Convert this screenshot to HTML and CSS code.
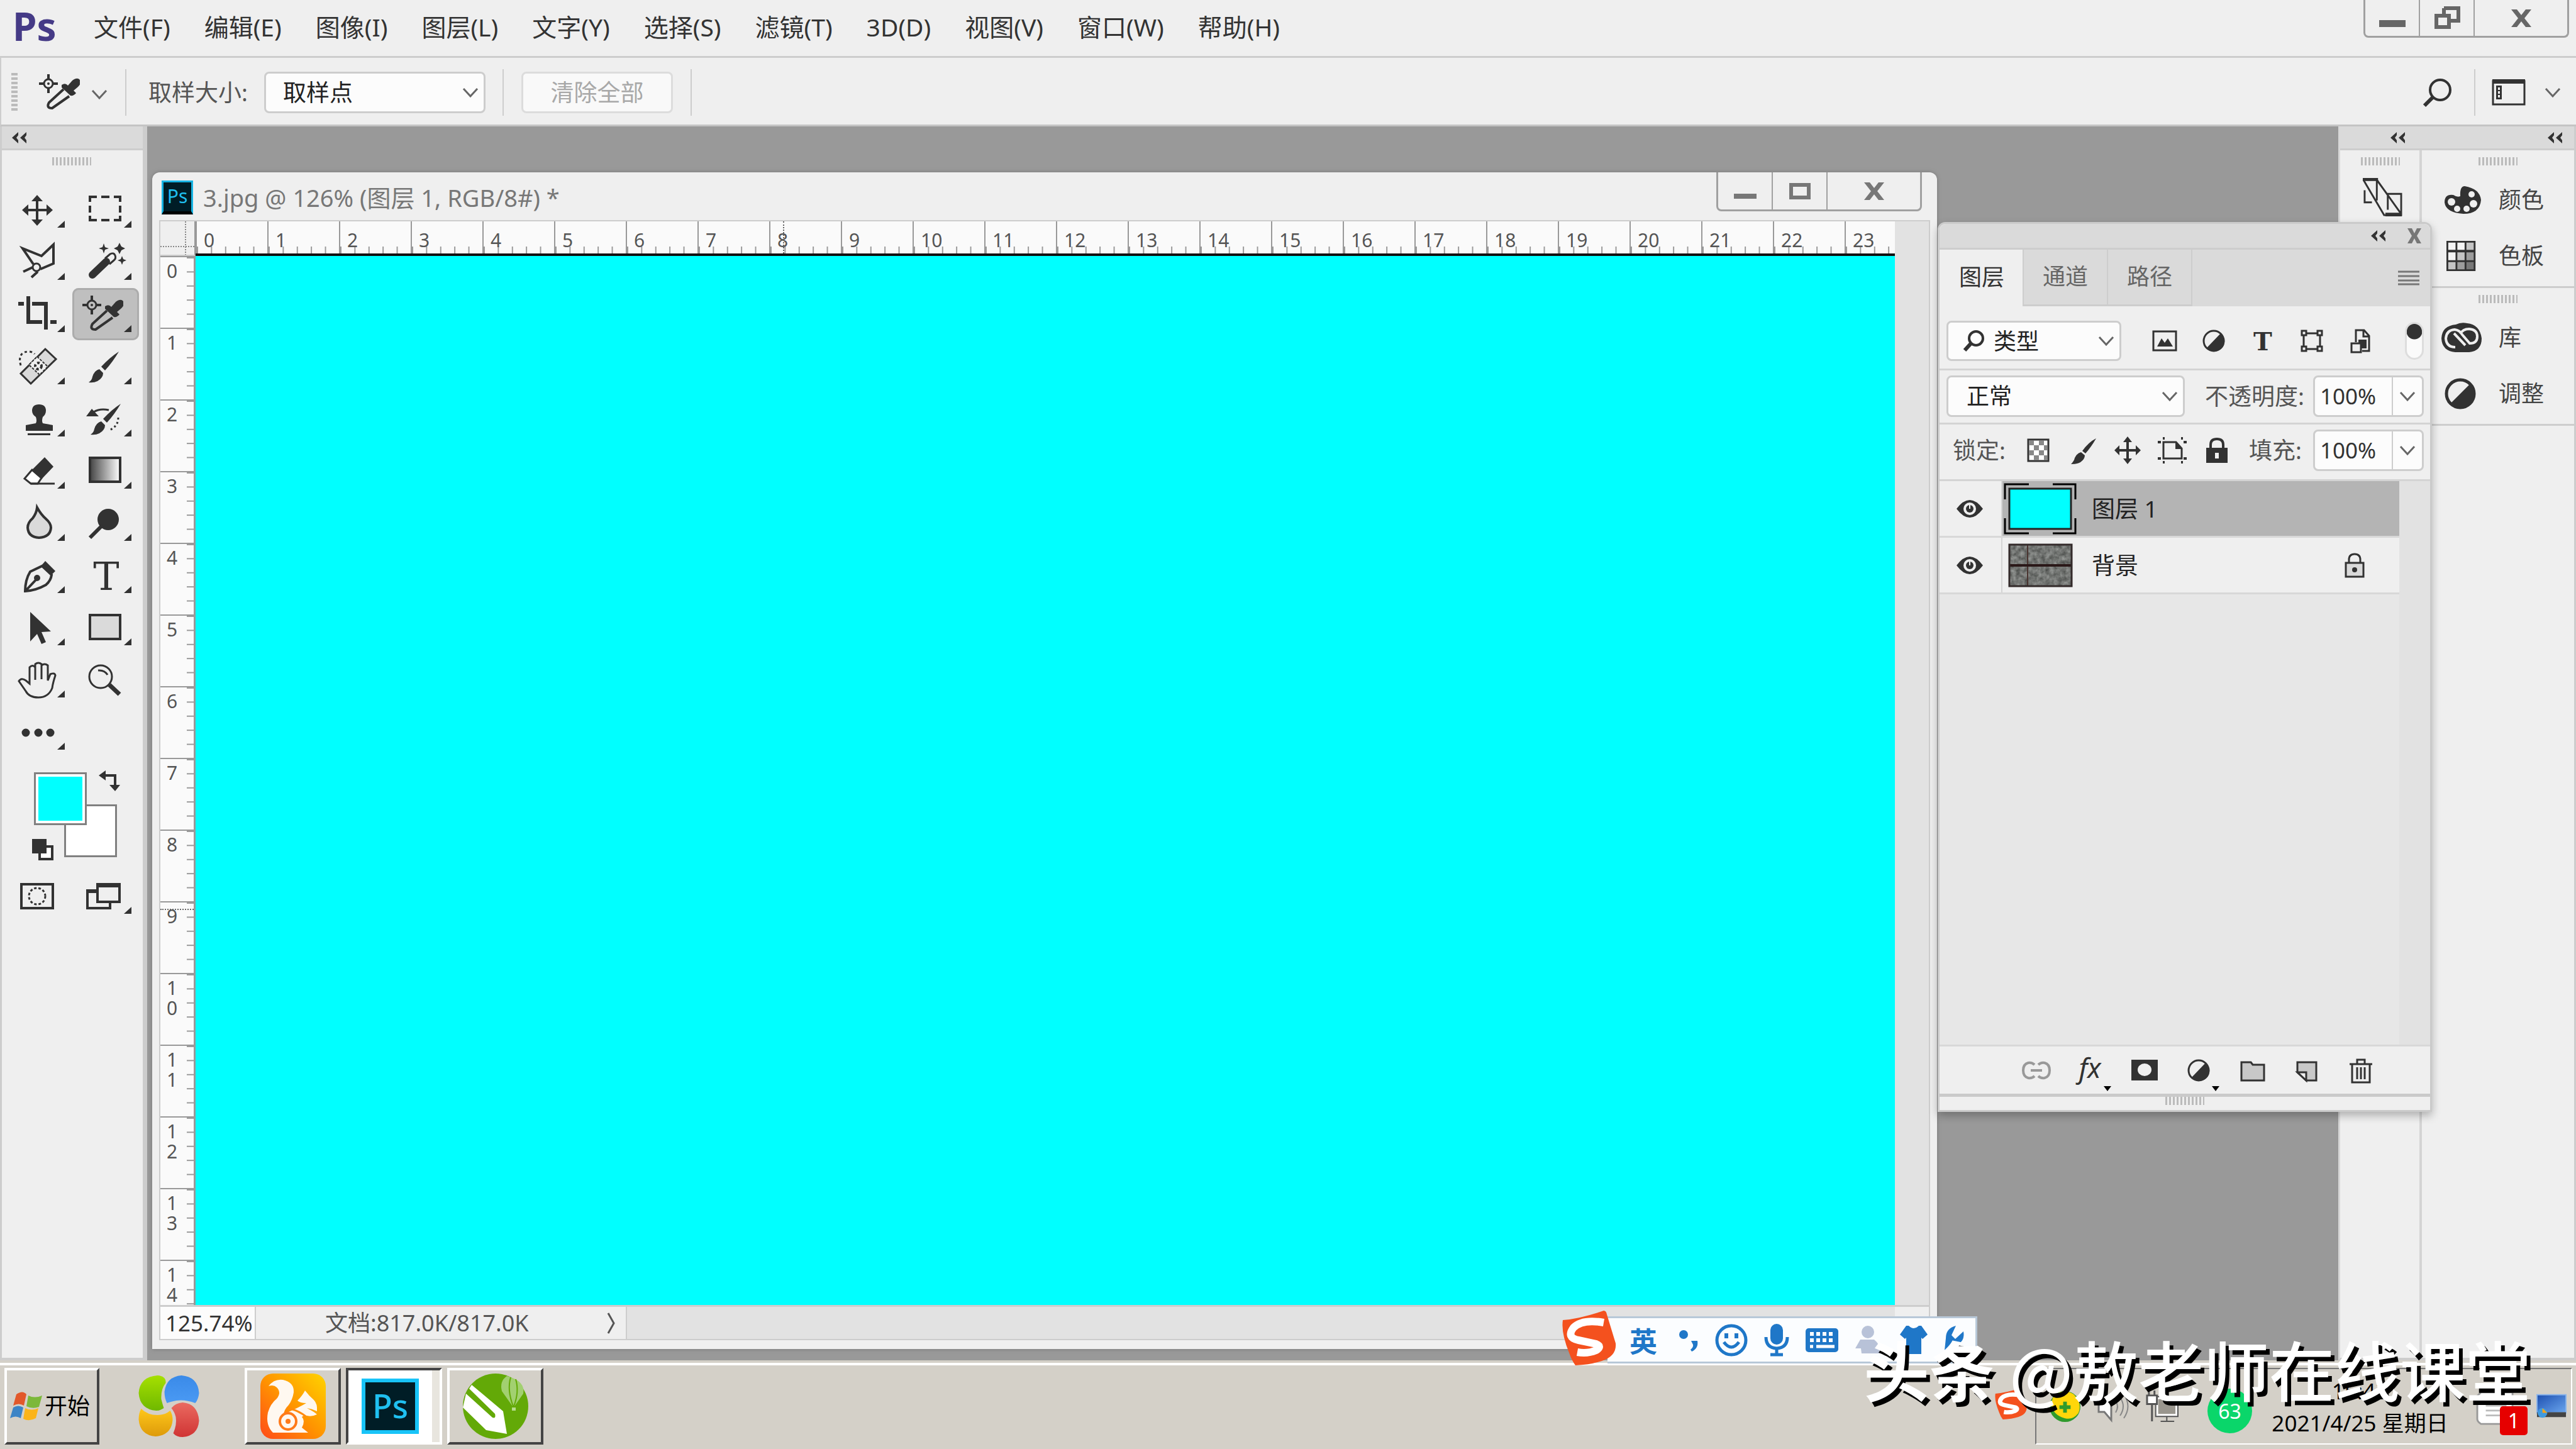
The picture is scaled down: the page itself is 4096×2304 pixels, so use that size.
FILE: index.html
```html
<!DOCTYPE html>
<html lang="zh-CN">
<head>
<meta charset="utf-8">
<title>3.jpg @ 126% (图层 1, RGB/8#) *</title>
<link rel="stylesheet" href="styles.css">
</head>
<body>
<svg class="defs" aria-hidden="true">
  <defs>
    <symbol id="chev" viewBox="0 0 26 16"><path d="M2 2l11 12L24 2" fill="none" stroke="#666" stroke-width="3"/></symbol>
    <symbol id="dbl" viewBox="0 0 26 18"><path d="M12 0L2 9l10 9V13L9 9l3-4zM25 0L15 9l10 9V13L22 9l3-4z" fill="#323232"/></symbol>
    <symbol id="flag" viewBox="0 0 12 11"><path d="M12 0V11H0z" fill="#323232"/></symbol>
    <symbol id="dropper" viewBox="0 0 66 60">
      <circle cx="16" cy="16" r="7" fill="none" stroke="#323232" stroke-width="3"/>
      <circle cx="16" cy="16" r="2" fill="#323232"/>
      <path d="M16 1v9M16 22v9M1 16h9M22 16h9" stroke="#323232" stroke-width="4"/>
      <path d="M40 25L17 46q-5 9 5 9L49 36" fill="none" stroke="#323232" stroke-width="4"/>
      <path d="M37 18q6-4 10 1l7-8q8-6 12-1t-4 12l-6 5 4 4q-4 5-9 4L37 22z" fill="#323232"/>
    </symbol>
    <symbol id="half" viewBox="0 0 38 38"><circle cx="19" cy="19" r="16" fill="none" stroke="#323232" stroke-width="3"/><path d="M30 7A16 16 0 1 1 8 30z" fill="#323232"/></symbol>
    <symbol id="eye" viewBox="0 0 42 28"><path d="M0 14Q21-14 42 14 21 42 0 14z" fill="#323232"/><circle cx="21" cy="14" r="10" fill="#efefef"/><circle cx="21" cy="14" r="6" fill="#323232"/><path d="M21 8v6" stroke="#efefef" stroke-width="2"/></symbol>
    <symbol id="sogou" viewBox="0 0 88 88"><path d="M3 16Q30 14 68 1q4 0 5 6l14 46q2 20-22 28-18 6-42 7-6-8-10-20Q0 36 3 16z" fill="#f4511e"/><path d="M68 20Q34 14 20 28q-12 16 8 20l28 6q10 4 0 10-14 6-30 3" fill="none" stroke="#fff" stroke-width="12"/></symbol>
    <linearGradient id="gr"><stop offset="0" stop-color="#444"/><stop offset="1" stop-color="#fff"/></linearGradient>
    <linearGradient id="uc" x1="1" y1="0" x2="0" y2="1"><stop offset="0" stop-color="#ffd400"/><stop offset=".5" stop-color="#ff9500"/><stop offset="1" stop-color="#ff4a1a"/></linearGradient>
    <linearGradient id="scr" x1="0" y1="0" x2="1" y2="1"><stop offset="0" stop-color="#1d4fb0"/><stop offset="1" stop-color="#6ba6ee"/></linearGradient>
    <linearGradient id="g1" x1="0" y1="0" x2="0" y2="1"><stop offset="0" stop-color="#a6e000"/><stop offset="1" stop-color="#6fb800"/></linearGradient>
    <linearGradient id="g2" x1="0" y1="0" x2="0" y2="1"><stop offset="0" stop-color="#3a8ae8"/><stop offset="1" stop-color="#4a9af4"/></linearGradient>
    <linearGradient id="g3" x1="0" y1="0" x2="0" y2="1"><stop offset="0" stop-color="#ffc71a"/><stop offset="1" stop-color="#dd9a0a"/></linearGradient>
    <linearGradient id="g4" x1="0" y1="0" x2="0" y2="1"><stop offset="0" stop-color="#ea6a60"/><stop offset="1" stop-color="#d03434"/></linearGradient>
    <filter id="grain" x="0" y="0" width="1" height="1" color-interpolation-filters="sRGB"><feTurbulence type="fractalNoise" baseFrequency=".15" numOctaves="3" seed="4"/><feColorMatrix values=".4 0 0 0 .25 .4 0 0 0 .26 .4 0 0 0 .25 0 0 0 0 1"/></filter>
  </defs>
</svg>

<header class="menubar">
  <span class="app-logo">Ps</span>
  <nav class="menus">
    <button>文件(F)</button><button>编辑(E)</button><button>图像(I)</button><button>图层(L)</button><button>文字(Y)</button><button>选择(S)</button><button>滤镜(T)</button><button>3D(D)</button><button>视图(V)</button><button>窗口(W)</button><button>帮助(H)</button>
  </nav>
  <div class="win-controls">
    <button aria-label="最小化"><svg width="42" height="36"><path d="M0 21h42v11H0z" fill="#666"/></svg></button>
    <button aria-label="还原"><svg width="42" height="36"><path d="M16 2h23v20H26M16 2v10" fill="none" stroke="#666" stroke-width="6"/><path d="M4 14h20v18H4z" fill="#efefef" stroke="#666" stroke-width="6"/></svg></button>
    <button aria-label="关闭"><svg width="32" height="28"><path d="M0 0h9l7 9 7-9h9L21 14l11 14h-9l-7-9-7 9H0l11-14z" fill="#666"/></svg></button>
  </div>
</header>

<section class="options">
  <span class="grip-v"></span>
  <svg class="opt-tool" width="66" height="60"><use href="#dropper"/></svg>
  <svg class="opt-chev" width="26" height="16"><use href="#chev"/></svg>
  <span class="sep"></span>
  <label class="opt-label" for="sample">取样大小:</label>
  <span class="select sample"><select id="sample"><option>取样点</option></select><svg width="26" height="16"><use href="#chev"/></svg></span>
  <span class="sep"></span>
  <button class="clear" disabled>清除全部</button>
  <span class="sep"></span>
  <div class="options-right">
    <svg width="46" height="46"><circle cx="27" cy="19" r="16" fill="none" stroke="#323232" stroke-width="4"/><path d="M15 31L2 44" stroke="#323232" stroke-width="6"/></svg>
    <span class="sep"></span>
    <svg width="54" height="42"><path d="M2 3h50v37H2z" fill="none" stroke="#323232" stroke-width="3"/><path d="M1 0h52v7H1zM7 10h9v22H7z" fill="#323232"/><path d="M10 13h3v4h-3zM10 19h3v4h-3zM10 25h3v4h-3z" fill="#efefef"/></svg>
    <svg class="ws-chev" width="26" height="16"><use href="#chev"/></svg>
  </div>
</section>

<main class="workspace">
  <aside class="toolbar">
    <div class="strip"><svg width="26" height="18"><use href="#dbl"/></svg></div>
    <span class="grip-h"></span>
    <div class="tools">
      <button aria-label="移动"><svg class="ico" viewBox="0 0 106 83"><path d="M50 26v34M34 42h34" stroke="#323232" stroke-width="4"/><path d="M50 18l9 10H41zM50 67l9-10H41zM26 42l10-9v18zM75 42l-10-9v18z" fill="#323232"/></svg><svg class="flag"><use href="#flag"/></svg></button>
      <button aria-label="选框"><svg class="ico" viewBox="0 0 106 83"><path d="M28 29v-8h11M46 21h13M66 21h10v8M76 35v11M76 51v7H66M59 58H46M39 58H28v-7M28 46V35" fill="none" stroke="#323232" stroke-width="4"/></svg><svg class="flag"><use href="#flag"/></svg></button>
      <button aria-label="套索"><svg class="ico" viewBox="0 0 106 83"><path d="M44 45L27 20l30 12 19-18v30l-21 9M28 57l15-7M41 66l10-9" fill="none" stroke="#323232" stroke-width="4"/><circle cx="49" cy="50" r="6" fill="none" stroke="#323232" stroke-width="3"/></svg><svg class="flag"><use href="#flag"/></svg></button>
      <button aria-label="魔棒"><svg class="ico" viewBox="0 0 106 83"><path d="M32 62l22-21" stroke="#323232" stroke-width="12" stroke-linecap="round"/><path d="M52 36l8-7q6-3 8 2t-2 8l-7 6" fill="none" stroke="#323232" stroke-width="3"/><path d="M50 12l2 6 6 2-6 2-2 6-2-6-6-2 6-2zM75 11l3 6 6 3-6 3-3 6-3-6-6-3 6-3zM79 32l2 5 5 2-5 2-2 5-2-5-5-2 5-2z" fill="#323232"/></svg><svg class="flag"><use href="#flag"/></svg></button>
      <button aria-label="裁剪"><svg class="ico" viewBox="0 0 106 83"><path d="M20 25h9M36 13v41h22M42 25h22v41M71 54h10" fill="none" stroke="#323232" stroke-width="6"/></svg><svg class="flag"><use href="#flag"/></svg></button>
      <button class="active" aria-label="颜色取样器"><svg class="ico" viewBox="-15 -11 106 83"><svg width="66" height="60"><use href="#dropper"/></svg></svg><svg class="flag"><use href="#flag"/></svg></button>
      <button aria-label="修复"><svg class="ico" viewBox="0 0 106 83"><path d="M63 14l17 16-40 39-16-16z" fill="#dadada" stroke="#323232" stroke-width="3"/><path d="M50 26l17 16-13 13-17-16z" fill="#efefef" stroke="#323232" stroke-width="2" stroke-dasharray="4 2"/><circle cx="52" cy="41" r="5" fill="none" stroke="#323232" stroke-width="4" stroke-dasharray="4 3"/><path d="M24 40q-6-22 14-22 6 1 8 4" fill="none" stroke="#323232" stroke-width="3" stroke-dasharray="4 4"/></svg><svg class="flag"><use href="#flag"/></svg></button>
      <button aria-label="画笔"><svg class="ico" viewBox="0 0 106 83"><path d="M74 18q-10 17-22 30l-6-6Q60 27 74 18zM43 46l6 6q0 8-9 13-6 3-14 2 5-3 6-9 3-10 11-12z" fill="#323232"/></svg><svg class="flag"><use href="#flag"/></svg></button>
      <button aria-label="图章"><svg class="ico" viewBox="0 0 106 83"><path d="M53 19q11 0 11 10 0 6-5 10-2 6 0 10 16 3 16 3v9H32v-9l16-3q2-4 0-10-6-4-6-10 0-10 11-10zM35 65h36v3H35z" fill="#323232"/></svg><svg class="flag"><use href="#flag"/></svg></button>
      <button aria-label="历史画笔"><svg class="ico" viewBox="0 0 106 83"><path d="M77 18q-10 17-22 30l-6-6Q63 27 77 18zM46 46l6 6q0 8-9 13-6 3-14 2 5-3 6-9 3-10 11-12zM22 38l9-12 11 12z" fill="#323232"/><path d="M34 31q10-6 24-3" fill="none" stroke="#323232" stroke-width="3"/><path d="M73 40q0 14-14 20" fill="none" stroke="#323232" stroke-width="3" stroke-dasharray="3 4"/></svg><svg class="flag"><use href="#flag"/></svg></button>
      <button aria-label="橡皮擦"><svg class="ico" viewBox="0 0 106 83"><path d="M42 40L30 54l10 8h11l6-9z" fill="#fff" stroke="#323232" stroke-width="3"/><path d="M62 20l14 15-19 20-16-14z" fill="#323232"/><path d="M40 62h38" stroke="#323232" stroke-width="3"/></svg><svg class="flag"><use href="#flag"/></svg></button>
      <button aria-label="渐变"><svg class="ico" viewBox="0 0 106 83"><path d="M28 21h48v38H28z" fill="url(#gr)" stroke="#323232" stroke-width="4"/></svg><svg class="flag"><use href="#flag"/></svg></button>
      <button aria-label="模糊"><svg class="ico" viewBox="0 0 106 83"><path d="M50 17q6 11 14 18 8 7 8 14-1 15-19 16-17-1-18-16 0-8 8-15 6-8 7-17z" fill="#dadada" stroke="#323232" stroke-width="4"/></svg><svg class="flag"><use href="#flag"/></svg></button>
      <button aria-label="减淡"><svg class="ico" viewBox="0 0 106 83"><circle cx="57" cy="36" r="17" fill="#323232"/><path d="M28 65l20-20" stroke="#323232" stroke-width="6"/></svg><svg class="flag"><use href="#flag"/></svg></button>
      <button aria-label="钢笔"><svg class="ico" viewBox="0 0 106 83"><path d="M31 67q0-18 8-31l19-9 15 14q-1 9-9 16-16 9-33 10zM32 66l17-18" fill="none" stroke="#323232" stroke-width="4"/><circle cx="50" cy="46" r="5" fill="#323232"/><path d="M63 19l16 16-6 6-16-15z" fill="#323232"/></svg><svg class="flag"><use href="#flag"/></svg></button>
      <button aria-label="文字"><svg class="ico" viewBox="0 0 106 83"><text class="tee" x="54" y="65">T</text></svg><svg class="flag"><use href="#flag"/></svg></button>
      <button aria-label="路径选择"><svg class="ico" viewBox="0 0 106 83"><path d="M39 17v47l11-12 7 16 7-3-7-16 15-1z" fill="#323232"/></svg><svg class="flag"><use href="#flag"/></svg></button>
      <button aria-label="矩形"><svg class="ico" viewBox="0 0 106 83"><path d="M28 22h48v38H28z" fill="#dadada" stroke="#323232" stroke-width="4"/></svg><svg class="flag"><use href="#flag"/></svg></button>
      <button aria-label="抓手"><svg class="ico" viewBox="0 0 106 83"><path d="M38 48V22q5-5 9 0v20V17q5-4 10 0v24V19q5-4 10 0v24l4-10q7-3 8 2-4 12-5 20-6 15-22 15-15 0-20-10L21 44q4-6 11-1z" fill="none" stroke="#323232" stroke-width="3"/></svg><svg class="flag"><use href="#flag"/></svg></button>
      <button aria-label="缩放"><svg class="ico" viewBox="0 0 106 83"><circle cx="45" cy="37" r="18" fill="none" stroke="#323232" stroke-width="3"/><path d="M41 27q10-1 15 7" fill="none" stroke="#323232" stroke-width="3"/><path d="M59 50l16 15" stroke="#323232" stroke-width="7"/></svg></button>
      <button aria-label="更多"><svg class="ico" viewBox="0 0 106 83"><path d="M32 43h0M52 43h0M71 43h0" stroke="#323232" stroke-width="13" stroke-linecap="round"/></svg><svg class="flag"><use href="#flag"/></svg></button>
    </div>
    <div class="swatches">
      <span class="bg"></span><span class="fg"></span>
      <svg class="swap" viewBox="0 0 34 34"><path d="M8 8h18v16" fill="none" stroke="#323232" stroke-width="4"/><path d="M0 8L11 0v16zM17 23h17l-8 10z" fill="#323232"/></svg>
      <svg class="reset" viewBox="0 0 34 34"><path d="M12 12h20v20H12z" fill="#fff" stroke="#323232" stroke-width="4"/><path d="M0 0h23v23H0z" fill="#323232"/></svg>
    </div>
    <div class="tools modes">
      <button aria-label="快速蒙版"><svg class="ico" viewBox="0 0 106 83"><path d="M25 23h50v38H25z" fill="none" stroke="#323232" stroke-width="4"/><circle cx="50" cy="42" r="13" fill="none" stroke="#323232" stroke-width="3" stroke-dasharray="4 3"/></svg></button>
      <button aria-label="屏幕模式"><svg class="ico" viewBox="0 0 106 83"><path d="M24 34h36v27H24z" fill="#efefef" stroke="#323232" stroke-width="4"/><path d="M40 25h35v26H40z" fill="#efefef" stroke="#323232" stroke-width="4"/><path d="M22 31h18v6H22zM38 21h39v7H38z" fill="#323232"/></svg><svg class="flag"><use href="#flag"/></svg></button>
    </div>
  </aside>

  <aside class="dock">
    <div class="strip"><svg width="26" height="18"><use href="#dbl"/></svg><svg width="26" height="18"><use href="#dbl"/></svg></div>
    <div class="dock-cols">
      <div class="dock-col">
        <span class="grip-h"></span>
        <svg class="history" viewBox="0 0 66 64"><path d="M2 3h22v34M2 3l34 58h28V26H42v26M4 20v20h12M24 3l40 56M26 6l16 22" fill="none" stroke="#323232" stroke-width="3"/><path d="M1 0h25v5H1zM38 57h27v6H38z" fill="#323232"/></svg>
      </div>
      <div class="dock-col">
        <section>
          <span class="grip-h"></span>
          <button class="entry"><svg viewBox="0 0 58 44"><path d="M25 16Q24 0 32 0 56 4 58 22 56 44 30 44 2 42 0 26 0 12 14 14 20 18 25 16z" fill="#323232"/><g fill="#efefef"><ellipse cx="11" cy="25" rx="6" ry="6"/><circle cx="20" cy="36" r="5"/><circle cx="35" cy="36" r="5"/><circle cx="46" cy="28" r="6"/><circle cx="43" cy="13" r="5"/></g></svg>颜色</button>
          <button class="entry"><svg viewBox="0 0 58 54"><path d="M2 2h48v50H2z" fill="#323232"/><g><path d="M5 5h12v12H5zM20 5h12v12H20zM5 21h12v13H5z" fill="#f4f4f4"/><path d="M35 5h12v12H35zM20 21h12v13H20zM5 37h12v12H5z" fill="#c4c4c4"/><path d="M35 21h12v13H35zM20 37h12v12H20z" fill="#9c9c9c"/><path d="M35 37h12v12H35z" fill="#777"/></g></svg>色板</button>
        </section>
        <section>
          <span class="grip-h"></span>
          <button class="entry"><svg class="wide" viewBox="0 0 66 50"><path d="M24 4q-22 2-23 22 1 20 22 22h22q20-2 20-22Q62 4 42 2 32 0 24 4z" fill="#323232"/><path d="M39 37l-18-19M23 40q-14 0-15-14 1-13 14-14 8 1 12 8l12 14q12 0 12-11T45 11q-10 0-14 8" fill="none" stroke="#efefef" stroke-width="4"/></svg>库</button>
          <button class="entry"><svg viewBox="0 0 58 50"><circle cx="25" cy="25" r="22" fill="none" stroke="#323232" stroke-width="5"/><path d="M41 9A22 22 0 1 1 9 41z" fill="#323232"/></svg>调整</button>
        </section>
      </div>
    </div>
  </aside>

  <article class="doc">
    <header class="doc-title">
      <span class="doc-logo">Ps</span>
      <h1>3.jpg @ 126% (图层 1, RGB/8#) *</h1>
      <div class="win-controls small">
        <button aria-label="最小化"><svg width="36" height="36"><path d="M0 22h36v8H0z" fill="#777"/></svg></button>
        <button aria-label="最大化"><svg width="36" height="36"><path d="M4 8h28v20H4z" fill="none" stroke="#777" stroke-width="6"/></svg></button>
        <button aria-label="关闭"><svg width="32" height="28"><path d="M0 0h9l7 9 7-9h9L21 14l11 14h-9l-7-9-7 9H0l11-14z" fill="#777"/></svg></button>
      </div>
    </header>
    <div class="doc-body">
      <div class="corner"></div>
      <div class="ruler-h"><span>0</span><span>1</span><span>2</span><span>3</span><span>4</span><span>5</span><span>6</span><span>7</span><span>8</span><span>9</span><span>10</span><span>11</span><span>12</span><span>13</span><span>14</span><span>15</span><span>16</span><span>17</span><span>18</span><span>19</span><span>20</span><span>21</span><span>22</span><span>23</span><i class="mark-x"></i></div>
      <div class="track-top"></div>
      <div class="ruler-v"><span>0</span><span>1</span><span>2</span><span>3</span><span>4</span><span>5</span><span>6</span><span>7</span><span>8</span><span>9</span><span>1<br>0</span><span>1<br>1</span><span>1<br>2</span><span>1<br>3</span><span>1<br>4</span><i class="mark-y"></i></div>
      <div class="canvas"></div>
      <div class="track-v"></div>
      <footer class="status">
        <input class="zoom-field" aria-label="缩放" value="125.74%">
        <div class="status-info"><span>文档:817.0K/817.0K</span><svg width="16" height="36"><path d="M2 2l9 16-9 16" fill="none" stroke="#555" stroke-width="3"/></svg></div>
      </footer>
    </div>
  </article>

  <aside class="panel">
    <div class="panel-head">
      <svg width="26" height="18"><use href="#dbl"/></svg>
      <svg width="22" height="24"><path d="M0 0h7l4 8 4-8h7l-7 12 7 12h-7l-4-8-4 8H0l7-12z" fill="#777"/></svg>
    </div>
    <div class="tabs">
      <button class="on">图层</button><button>通道</button><button>路径</button>
      <svg width="34" height="24"><path d="M0 2h34M0 9h34M0 16h34M0 22h34" stroke="#777" stroke-width="3"/></svg>
    </div>
    <div class="row filter">
      <span class="select kind"><svg class="lens" viewBox="0 0 34 34"><circle cx="20" cy="13" r="11" fill="none" stroke="#323232" stroke-width="4"/><path d="M12 21L2 32" stroke="#323232" stroke-width="6"/></svg><select aria-label="筛选类型"><option>类型</option></select><svg width="26" height="16"><use href="#chev"/></svg></span>
      <div class="filters">
        <svg viewBox="0 0 40 40"><path d="M2 5h36v30H2z" fill="none" stroke="#323232" stroke-width="3"/><path d="M8 29l7-13 5 7 5-7 8 13z" fill="#323232"/></svg>
        <svg viewBox="-1 -1 40 40"><use href="#half" width="38" height="38"/></svg>
        <svg viewBox="0 0 40 40"><text class="tee bold" x="20" y="35">T</text></svg>
        <svg viewBox="0 0 40 40"><path d="M7 8h26v25H7z" fill="none" stroke="#323232" stroke-width="3"/><path d="M4 4h7v7H4zM29 4h7v7h-7zM4 29h7v7H4zM29 29h7v7h-7z" fill="#efefef" stroke="#323232" stroke-width="3"/></svg>
        <svg viewBox="0 0 40 40"><path d="M12 22V3h13l8 9v24H22M24 3v10h9" fill="none" stroke="#323232" stroke-width="3"/><path d="M16 18h13v14H16z" fill="#323232"/><path d="M5 24h15v14H5z" fill="#efefef" stroke="#323232" stroke-width="3"/></svg>
      </div>
      <span class="toggle"></span>
    </div>
    <div class="row blend">
      <span class="select mode"><select aria-label="混合模式"><option>正常</option></select><svg width="26" height="16"><use href="#chev"/></svg></span>
      <div class="field"><label for="opacity">不透明度:</label><span class="num"><input id="opacity" value="100%"><i><svg width="26" height="16"><use href="#chev"/></svg></i></span></div>
    </div>
    <div class="row locks">
      <span class="lock-label">锁定:</span>
      <div class="lock-icons">
        <svg viewBox="0 0 46 46"><path d="M7 6h32v34H7z" fill="#fff" stroke="#323232" stroke-width="3"/><path d="M8 7h8v8H8zM24 7h8v8h-8zM16 15h8v8h-8zM32 15h6v8h-6zM8 23h8v8H8zM24 23h8v8h-8zM16 31h8v8h-8zM32 31h6v8h-6z" fill="#888"/></svg>
        <svg viewBox="0 0 46 46"><path d="M44 4Q36 18 27 28l-5-4Q32 10 44 4zM20 26l6 5q0 6-7 11-5 3-15 3 5-5 6-10 4-8 10-9z" fill="#323232"/></svg>
        <svg viewBox="0 0 46 46"><path d="M23 6v34M6 23h34" stroke="#323232" stroke-width="4"/><path d="M23 1l7 9H16zM23 45l7-9H16zM2 23l8-8v16zM44 23l-8-8v16z" fill="#323232"/></svg>
        <svg viewBox="0 0 46 46"><path d="M9 10h20l9 10v16H9z" fill="none" stroke="#323232" stroke-width="3"/><path d="M28 9v12h11zM8 2v4h3V2zM37 2v4h3V2zM8 40v4h3v-4zM37 40v4h3v-4zM0 8v4h5V8zM41 8v4h5V8zM0 34v4h5v-4zM41 34v4h5v-4z" fill="#323232"/></svg>
        <svg viewBox="0 0 46 46"><path d="M13 20v-6q0-9 10-9t10 9v6" fill="none" stroke="#323232" stroke-width="4"/><path d="M6 19h34v24H6z" fill="#323232"/><path d="M20 27h6v9h-6z" fill="#efefef"/></svg>
      </div>
      <div class="field"><label for="fill">填充:</label><span class="num"><input id="fill" value="100%"><i><svg width="26" height="16"><use href="#chev"/></svg></i></span></div>
    </div>
    <div class="layers">
      <ul>
        <li class="layer selected">
          <span class="eye"><svg width="42" height="28"><use href="#eye"/></svg></span>
          <span class="thumb framed"><svg viewBox="0 0 116 82"><path d="M2 26V2h38M78 2h36v24M114 56v24H78M40 80H2V56" fill="none" stroke="#000" stroke-width="3"/><path d="M9 9h98v64H9z" fill="#0ff" stroke="#222" stroke-width="3"/></svg></span>
          <span class="name">图层 1</span>
        </li>
        <li class="layer">
          <span class="eye"><svg width="42" height="28"><use href="#eye"/></svg></span>
          <span class="thumb"><svg viewBox="0 0 116 82"><path d="M8 7h101v68H8z" filter="url(#grain)"/><path d="M38 8v66" stroke="#4a3430" stroke-width="2"/><path d="M8 41h101" stroke="#2a1818" stroke-width="4"/><path d="M9 8h99v66H9z" fill="none" stroke="#332a2a" stroke-width="3"/></svg></span>
          <span class="name">背景</span>
          <svg class="layer-lock" viewBox="0 0 34 40"><path d="M8 16v-5q0-9 9-9t9 9v5" fill="none" stroke="#323232" stroke-width="3"/><path d="M3 16h28v22H3z" fill="#dadada" stroke="#323232" stroke-width="3"/><circle cx="17" cy="27" r="4" fill="#323232"/></svg>
        </li>
      </ul>
      <div class="layer-track"></div>
    </div>
    <div class="panel-foot">
      <svg viewBox="0 0 50 50"><path d="M22 16q-4-4-10-3-8 2-8 12t8 12q6 1 10-3M28 16q4-4 10-3 8 2 8 12t-8 12q-6 1-10-3" fill="none" stroke="#999" stroke-width="4"/><path d="M16 25h18" stroke="#999" stroke-width="4"/></svg>
      <span class="with-arrow"><svg viewBox="0 0 50 50"><text class="fx" x="24" y="37">fx</text></svg><svg class="tiny" viewBox="0 0 12 8"><path d="M0 0h12L6 8z"/></svg></span>
      <svg viewBox="0 0 50 50"><path d="M4 8h42v33H4z" fill="#323232"/><ellipse cx="25" cy="24" rx="11" ry="10" fill="#efefef"/></svg>
      <span class="with-arrow"><svg viewBox="0 0 50 50"><use href="#half" x="6" y="6" width="38" height="38"/></svg><svg class="tiny" viewBox="0 0 12 8"><path d="M0 0h12L6 8z"/></svg></span>
      <svg viewBox="0 0 50 50"><path d="M7 12h15l3 4h18v25H7z" fill="#c8c8c8" stroke="#323232" stroke-width="3"/></svg>
      <svg viewBox="0 0 50 50"><path d="M10 12h30v29H24L10 28z" fill="#c8c8c8" stroke="#323232" stroke-width="3"/><path d="M10 28h14v13z" fill="#efefef" stroke="#323232" stroke-width="3"/></svg>
      <svg viewBox="0 0 50 50"><path d="M7 15h36M19 14V8h12v6M11 16v28h28V16M19 20v19M25 20v19M31 20v19" fill="none" stroke="#323232" stroke-width="3"/></svg>
    </div>
    <div class="panel-grip"><span class="grip-h"></span></div>
  </aside>
</main>

<footer class="taskbar">
  <button class="task start"><svg viewBox="0 0 52 46"><path d="M10 4q10-7 16 0l-4 18q-8-5-17 0z" fill="#e2582a"/><path d="M29 6q10 5 22 0l-5 18q-10 4-20-1z" fill="#7cb83a"/><path d="M5 25q8-5 16 0l-4 17q-8-5-17 0z" fill="#3c84c6"/><path d="M24 26q10 5 21 0l-4 16q-11 6-20 1z" fill="#fbb41a"/></svg>开始</button>
  <svg class="clover" viewBox="0 0 96 98"><path d="M30 0q14 1 13 12-8 10-7 26 2 8 4 14-6 4-12 4Q2 54 0 28 2 2 30 0z" fill="url(#g1)"/><path d="M68 0q26 2 28 28-1 10-6 16-16-6-30-4-10 2-15 4-4-8-4-18Q44 2 68 0z" fill="url(#g2)"/><path d="M4 53q10 10 26 10 12 0 20-7 4 6 4 15-2 24-27 26Q2 95 0 70 0 60 4 53z" fill="url(#g3)"/><path d="M70 43q24 2 26 29-2 24-26 26-10 0-15-6 6-14 4-26-2-8-7-14 6-8 18-9z" fill="url(#g4)"/></svg>
  <button class="task" aria-label="UC浏览器"><svg viewBox="0 0 104 104"><rect width="104" height="104" rx="20" fill="url(#uc)"/><path d="M13 20Q22 8 36 10q18 4 17 20-2 12-8 20-8 8-8 16 0-2 8-5 18-8 28-14-10 0-14-4 8-8 12-16 6 8 14 15 6 6 5 18-8-4-16-5 12 6 16 10-8 4-16 2-6-1-8 2 6 6 0 17l10 8H20Q8 82 12 62q4-14 14-22 8-10 0-18-5-5-13-2z" fill="#fff8f0"/><circle cx="44" cy="76" r="13" fill="none" stroke="#ff7a1a" stroke-width="4"/><circle cx="44" cy="76" r="4" fill="#ff7a1a"/><path d="M48 56q14 4 24 12" fill="none" stroke="#ff8a10" stroke-width="3"/></svg></button>
  <button class="task pressed" aria-label="Photoshop"><span class="ps-logo">Ps</span></button>
  <button class="task" aria-label="CorelDRAW"><svg viewBox="0 0 104 104"><circle cx="52" cy="52" r="52" fill="#63a907"/><path d="M14 18l50 42 6 36-33-6L0 54l5-22 42 38q6 2 4-6L10 24z" fill="#fff"/><path d="M70 4q30 8 26 28L82 52h-3L62 28q-4-16 8-24z" fill="#a2d070"/><path d="M76 6q-6 20 4 46M84 9q6 20-3 43" fill="none" stroke="#63a907" stroke-width="2"/><path d="M78 54h6v5h-6z" fill="#b6dc8c"/></svg></button>
  <svg class="tray-sogou" viewBox="0 0 88 88" preserveAspectRatio="none"><use href="#sogou"/></svg>
  <div class="tray">
    <svg class="i360" viewBox="0 0 52 52"><circle cx="26" cy="26" r="25" fill="#2f9a2c"/><path d="M6 12Q22-6 40 6q14 14 8 30-8 12-22 9Q6 40 4 22z" fill="#ffd60a"/><path d="M26 18v18M17 27h18" stroke="#2f9a2c" stroke-width="6"/></svg>
    <svg class="speaker" viewBox="0 0 50 50"><path d="M2 17h9L22 5v42L11 34H2z" fill="#fff" stroke="#777" stroke-width="3"/><path d="M29 17q6 8 0 18M36 11q10 14 0 29M42 6q13 19 0 38" fill="none" stroke="#888" stroke-width="2"/></svg>
    <svg class="network" viewBox="0 0 52 52"><path d="M18 12h32v28H18z" fill="#9a968e" stroke="#fff" stroke-width="4"/><path d="M16 10h36v32H16zM24 50h22M34 42v8" fill="none" stroke="#555" stroke-width="2"/><path d="M2 8h16v14H2zM5 0v8M14 0v8M10 22v28" fill="#fff" stroke="#555" stroke-width="3"/></svg>
    <span class="score">63</span>
    <time class="clock"><span>15:43</span><span>2021/4/25 星期日</span></time>
    <span class="notes"><svg viewBox="0 0 62 60"><path d="M6 4h52v52H6q-6-4-6-8V10z" fill="#fff" stroke="#999" stroke-width="3"/><path d="M14 18h34M14 26h34M14 34h34M14 42h34" stroke="#bbb" stroke-width="3"/></svg><b>1</b></span>
    <svg class="monitor" viewBox="0 0 50 40"><path d="M1 1h48v30H1z" fill="url(#scr)" stroke="#8ab4ea" stroke-width="2"/><path d="M1 30h48v8H1z" fill="#444"/><circle cx="10" cy="31" r="8" fill="#3f9ae0"/><path d="M10 23v8h8z" fill="#f5a21a"/></svg>
  </div>
</footer>

<div class="ime">
  <svg class="ime-logo" viewBox="0 0 88 88"><use href="#sogou"/></svg>
  <div class="ime-bar">
    <span class="ime-lang">英</span>
    <svg width="30" height="40" viewBox="0 0 30 40"><circle cx="7" cy="11" r="7" fill="#1f77c8"/><path d="M19 21h10q2 12-9 17l-2-3q5-4 4-8z" fill="#1f77c8"/></svg>
    <svg width="52" height="52" viewBox="0 0 52 52"><circle cx="26" cy="26" r="23" fill="none" stroke="#1f77c8" stroke-width="5"/><path d="M18 15v8M34 15v8" stroke="#1f77c8" stroke-width="6"/><path d="M14 29q12 16 24 0" fill="none" stroke="#1f77c8" stroke-width="5"/></svg>
    <svg width="38" height="52" viewBox="0 0 38 52"><rect x="9" width="20" height="33" rx="10" fill="#1f77c8"/><path d="M2 21q0 17 17 18 17-1 17-18M19 38v10M9 49h20" fill="none" stroke="#1f77c8" stroke-width="5"/></svg>
    <svg width="52" height="38" viewBox="0 0 52 38"><rect width="52" height="38" rx="5" fill="#1f77c8"/><path d="M7 9h38M7 19h38" stroke="#fff" stroke-width="6" stroke-dasharray="6 4"/><path d="M7 29h5M17 29h29" stroke="#fff" stroke-width="5"/></svg>
    <svg width="44" height="46" viewBox="0 0 44 46"><circle cx="20" cy="10" r="10" fill="#b8c2d8"/><path d="M8 22h22q10 8 12 22H10L9 36H0z" fill="#b8c2d8"/></svg>
    <svg width="44" height="46" viewBox="0 0 44 46"><path d="M10 0h4q8 8 16 0h4l10 14-8 7-2-2v26H10V19l-2 2-8-7z" fill="#1f77c8"/></svg>
    <svg width="32" height="46" viewBox="0 0 32 46"><path d="M2 20Q2 4 18 0L11 15l6 6L30 9q3 16-12 22L8 45l-8-6z" fill="#1f77c8"/></svg>
  </div>
</div>
<p class="watermark"><b>头条</b> @敖老师在线课堂</p>
</body>
</html>
```
FILE: styles.css
```css
* { box-sizing: border-box; }
html, body { height: 100%; }
body {
  margin: 0;
  display: flex;
  flex-direction: column;
  overflow: hidden;
  position: relative;
  background: #efefef;
  color: #333;
  font-family: "Noto Sans", "Noto Sans CJK SC", sans-serif;
  font-size: 36px;
  line-height: 48px;
}
button, input, select { font: inherit; color: inherit; margin: 0; }
button { border: 0; padding: 0; background: none; }
svg { display: block; flex: none; overflow: visible; }
.defs { position: absolute; width: 0; height: 0; overflow: hidden; }

/* menu bar */
.menubar {
  height: 92px;
  flex: none;
  display: flex;
  align-items: flex-start;
  border-bottom: 3px solid #cdcdcd;
}
.app-logo {
  width: 149px;
  padding-left: 20px;
  font: bold 62px/82px "Noto Sans", sans-serif;
  color: #453a86;
}
.menus { display: flex; gap: 54px; font-size: 39px; line-height: 86px; }
.win-controls {
  margin-left: auto;
  margin-right: 11px;
  display: flex;
  height: 60px;
  border: 3px solid #a0a0a0;
  border-top: 0;
  border-radius: 0 0 8px 8px;
}
.win-controls button { width: 87px; display: grid; place-items: center; border-right: 2px solid #a0a0a0; }
.win-controls button:last-child { width: 147px; border-right: 0; }

/* options bar */
.options {
  height: 109px;
  flex: none;
  display: flex;
  align-items: center;
  padding: 3px 0 0 16px;
  border-left: 2px solid #cdcdcd;
  border-bottom: 3px solid #c4c4c4;
  font-size: 37px;
}
.grip-v {
  width: 10px;
  height: 62px;
  background: repeating-linear-gradient(#bbb 0 4px, transparent 4px 7px);
}
.grip-h {
  display: block;
  width: 62px;
  height: 13px;
  background: repeating-linear-gradient(90deg, #bbb 0 3px, transparent 3px 6px);
}
.opt-tool { margin-left: 33px; }
.opt-chev { margin: 6px 28px 0 18px; }
.sep { width: 2px; height: 74px; background: #cdcdcd; }
.opt-label { width: 184px; margin-left: 35px; color: #555; white-space: nowrap; }
.select {
  position: relative;
  display: flex;
  align-items: center;
  height: 66px;
  background: #fcfcfc;
  border: 3px solid #cdcdcd;
  border-radius: 8px;
  color: #222;
}
.select select {
  appearance: none;
  border: 0;
  background: none;
  width: 100%;
  height: 100%;
  padding: 0 0 0 27px;
  line-height: 60px;
}
.select svg:last-child { position: absolute; right: 8px; pointer-events: none; }
.sample { width: 352px; margin-right: 27px; }
.clear {
  width: 241px;
  height: 66px;
  margin: 0 28px;
  border: 3px solid #dcdcdc;
  border-radius: 8px;
  background: #f9f9f9;
  color: #a8a8a8;
}
.options-right { margin-left: auto; display: flex; align-items: center; gap: 26px; padding-right: 24px; }
.options-right .sep { margin-left: 9px; }
.ws-chev { margin-left: 4px; }

/* workspace */
.workspace {
  flex: 1;
  min-height: 0;
  display: flex;
  justify-content: space-between;
  position: relative;
  background: #999;
}
.strip {
  height: 38px;
  flex: none;
  display: flex;
  align-items: center;
  background: #dadada;
  border-bottom: 3px solid #cdcdcd;
}
.toolbar {
  width: 234px;
  display: flex;
  flex-direction: column;
  background: #efefef;
  border-left: 3px solid #cdcdcd;
  border-right: 7px solid #cdcdcd;
  border-bottom: 4px solid #cdcdcd;
}
.toolbar .strip { padding-left: 14px; }
.toolbar > .grip-h { margin: 11px 0 29px 80px; }
.tools { display: grid; grid-template-columns: 106px 106px; grid-auto-rows: 83px; padding-left: 6px; }
.tools button { position: relative; border-radius: 10px; }
.tools .active { background: #bfbfbf; box-shadow: inset 0 0 0 3px #acacac; }
.ico { width: 106px; height: 83px; }
.flag { position: absolute; right: 12px; bottom: 13px; width: 12px; height: 11px; }
.tee { font: 62px "DejaVu Serif", serif; text-anchor: middle; fill: #323232; }
.tee.bold { font: bold 40px "DejaVu Serif", serif; }
.swatches { position: relative; height: 142px; margin: 20px 0 16px; }
.swatches span { position: absolute; width: 84px; height: 84px; border: 3px solid #808080; background: #fff; }
.swatches .fg { left: 51px; top: 3px; background: #0ff; box-shadow: inset 0 0 0 4px #fff; }
.swatches .bg { left: 99px; top: 54px; }
.swap { position: absolute; left: 154px; top: 0; width: 34px; height: 34px; }
.reset { position: absolute; left: 48px; top: 109px; width: 34px; height: 34px; }

/* dock on the right */
.dock { width: 378px; display: flex; flex-direction: column; background: #efefef; border-left: 3px solid #d8d8d8; border-right: 3px solid #cdcdcd; border-bottom: 4px solid #cdcdcd; }
.dock .strip { justify-content: space-between; padding: 0 18px 0 78px; }
.dock-cols { flex: 1; display: grid; grid-template-columns: 126px 1fr; }
.dock-col { border-left: 4px solid #d4d4d4; }
.dock-col:first-child { border-left: 0; }
.dock-col:first-child .grip-h { margin: 11px 0 20px 33px; }
.history { width: 66px; height: 62px; margin-left: 34px; }
.dock-col section { padding: 11px 0 4px; border-bottom: 3px solid #cdcdcd; }
.dock-col section .grip-h { margin: 0 auto 10px 90px; }
.entry { width: 100%; height: 89px; display: flex; align-items: center; gap: 28px; padding-left: 36px; color: #444; }
.entry svg { width: 58px; height: 52px; }
.entry .wide { width: 66px; height: 50px; margin: 0 -2px 0 -6px; }

/* document window */
.doc {
  position: absolute;
  left: 242px;
  top: 73px;
  right: 1016px;
  bottom: 18px;
  display: flex;
  flex-direction: column;
  padding: 0 11px 14px;
  background: #efefef;
  border-radius: 12px 12px 0 0;
  box-shadow: 0 0 6px #777;
}
.doc-title { height: 76px; flex: none; display: flex; align-items: center; padding: 4px 0 0 4px; color: #777; }
.doc-logo {
  width: 50px;
  height: 54px;
  border: 3px solid #18b4e4;
  border-bottom: 5px solid #000;
  background: #001d26;
  color: #1fc0f0;
  font: 30px/44px "Noto Sans", sans-serif;
  text-align: center;
}
h1 { margin: 0 0 0 16px; font-size: 38px; font-weight: 400; line-height: 56px; }
.small { align-self: flex-start; height: 62px; margin: -4px 13px 0 auto; }
.doc-body {
  flex: 1;
  min-height: 0;
  display: grid;
  grid-template-columns: 56px 1fr 54px;
  grid-template-rows: 55px 1fr 54px;
  border: 2px solid #cdcdcd;
}
.corner {
  border-right: 2px solid #999;
  border-bottom: 2px solid #ccc;
  background:
    repeating-linear-gradient(#888 0 2px, transparent 2px 4px) 39px 0 / 2px 100% no-repeat,
    repeating-linear-gradient(90deg, #888 0 2px, transparent 2px 4px) 0 39px / 100% 2px no-repeat;
}
.ruler-h, .ruler-v { position: relative; display: flex; overflow: hidden; background: #fafafa; font-size: 30px; color: #555; }
.ruler-h { border-bottom: 4px solid #111; }
.ruler-h span {
  flex: none;
  width: 114px;
  padding-left: 11px;
  line-height: 60px;
  border-left: 2px solid #999;
  background: linear-gradient(90deg, #999 2px, transparent 2px) 0 100% / 20% 11px repeat-x;
}
.ruler-v { flex-direction: column; border-right: 3px solid #999; }
.ruler-v span {
  flex: none;
  height: 114px;
  padding: 6px 0 0 10px;
  line-height: 32px;
  border-top: 2px solid #999;
  background: linear-gradient(#999 2px, transparent 2px) 100% 0 / 11px 20% repeat-y;
}
.mark-x { position: absolute; left: 934px; top: 0; bottom: 0; border-left: 2px dotted #666; }
.mark-y { position: absolute; top: 1038px; left: 0; right: 0; border-top: 2px dotted #666; }
.canvas { background: #0ff; }
.track-top, .track-v { background: #e2e2e2; }
.status { grid-column: 1 / -1; display: flex; background: linear-gradient(90deg, #e2e2e2 calc(100% - 54px), #efefef 0); border-top: 3px solid #cdcdcd; }
.zoom-field { width: 152px; border: 0; border-right: 2px solid #cdcdcd; background: #fcfcfc; padding: 0 0 0 8px; font-size: 35px; color: #333; }
.status-info { width: 590px; display: flex; align-items: center; justify-content: space-between; padding: 0 14px 0 110px; background: #efefef; border-right: 2px solid #cdcdcd; color: #555; white-space: nowrap; }

/* layers panel */
.panel {
  position: absolute;
  right: 229px;
  top: 152px;
  bottom: 395px;
  width: 786px;
  display: flex;
  flex-direction: column;
  background: #efefef;
  border: 3px solid #cacaca;
  border-radius: 12px 12px 0 0;
  box-shadow: 0 6px 14px #0004;
}
.panel-head { height: 41px; flex: none; display: flex; align-items: center; justify-content: flex-end; gap: 34px; padding-right: 14px; background: #dadada; border-bottom: 3px solid #cdcdcd; border-radius: 10px 10px 0 0; }
.tabs { height: 90px; flex: none; display: flex; background: #dadada; color: #666; }
.tabs button { width: 134px; padding-bottom: 2px; border: solid #cdcdcd; border-width: 0 2px 3px 0; }
.tabs .on { background: #efefef; color: #333; border-bottom: 0; padding-left: 2px; }
.tabs svg { align-self: center; margin-left: auto; margin-right: 17px; }
.row { flex: none; display: flex; align-items: center; padding: 0 10px 0 11px; border-bottom: 3px solid #d4d4d4; white-space: nowrap; }
.filter { height: 102px; padding-top: 11px; }
.blend { height: 86px; padding-bottom: 2px; }
.locks { height: 90px; padding-bottom: 5px; }
.kind { width: 278px; height: 64px; }
.kind .lens { position: absolute; left: 24px; width: 34px; height: 34px; }
.kind select { padding-left: 72px; }
.filters { display: flex; gap: 38px; margin-left: 49px; }
.filters svg { width: 40px; height: 40px; }
.toggle { width: 30px; height: 60px; margin-left: auto; border: 3px solid #ddd; border-radius: 15px; background: radial-gradient(circle at 50% 12px, #323232 12px, #fafafa 13px); }
.mode { width: 379px; height: 66px; }
.mode select { padding-left: 29px; }
.field { margin-left: auto; display: flex; align-items: center; gap: 14px; font-size: 37px; color: #555; }
.field label { min-width: 88px; }
.num { display: flex; width: 176px; height: 66px; background: #fcfcfc; border: 3px solid #cdcdcd; border-radius: 8px; }
.num input { width: 124px; border: 0; border-right: 2px solid #cdcdcd; background: none; padding: 0 0 0 8px; font-size: 35px; color: #333; }
.num i { flex: 1; display: grid; place-items: center; }
.lock-label { margin-left: 10px; width: 113px; font-size: 37px; color: #555; }
.lock-icons { display: flex; gap: 25px; }
.lock-icons svg { width: 46px; height: 46px; }
.layers { flex: 1; min-height: 0; display: grid; grid-template-columns: 1fr 49px; background: #e7e7e7; border-bottom: 3px solid #d8d8d8; }
.layers ul { margin: 0; padding: 0; list-style: none; }
.layer-track { background: #e2e2e2; }
.layer { height: 90px; display: flex; align-items: center; background: #efefef; border-bottom: 3px solid #d8d8d8; }
.eye { width: 100px; height: 100%; display: grid; place-items: center; padding-right: 8px; padding-left: 6px; background: #efefef; border-right: 2px solid #d4d4d4; }
.layer.selected { background: #b4b4b4; }
.thumb svg { width: 116px; height: 82px; margin-left: 2px; }
.name { margin-left: 24px; font-size: 37px; color: #222; }
.layer-lock { width: 34px; height: 40px; margin-left: auto; margin-right: 54px; }
.panel-foot { height: 80px; flex: none; display: flex; align-items: center; justify-content: flex-end; gap: 36px; padding-right: 85px; border-bottom: 5px solid #cacaca; }
.panel-foot svg { width: 50px; height: 50px; }
.with-arrow { position: relative; }
.panel-foot .tiny { position: absolute; right: -8px; bottom: -8px; width: 12px; height: 8px; }
.fx { font: italic 44px "Noto Sans", sans-serif; text-anchor: middle; fill: #323232; }
.panel-grip { height: 21px; flex: none; display: flex; justify-content: center; }

/* taskbar */
.taskbar {
  height: 141px;
  flex: none;
  display: flex;
  align-items: flex-start;
  padding: 8px 6px 0 7px;
  background: #d4d0c8;
  border-top: 4px solid #d4d0c8;
  box-shadow: inset 0 4px #fff;
}
.task {
  width: 153px;
  height: 122px;
  margin-right: 8px;
  display: flex;
  align-items: center;
  justify-content: center;
  border: 4px solid;
  border-color: #fff #444 #444 #fff;
}
.task svg { width: 104px; height: 104px; }
.task.start { width: 151px; gap: 3px; padding-right: 6px; color: #000; }
.task.start svg { width: 52px; height: 46px; }
.clover { width: 97px; height: 98px; margin: 12px 72px 0 54px; }
.pressed { background: #fff; border-color: #444 #fff #fff #444; box-shadow: inset -12px 0 #e8e5de; padding-right: 12px; }
.ps-logo { width: 91px; height: 88px; border: 6px solid #18c4f8; background: #001d26; color: #1fc0f0; font: 500 52px/74px "Noto Sans", sans-serif; }
.tray-sogou { width: 52px; height: 50px; margin: 32px 13px 0 auto; }
.tray {
  height: 122px;
  width: 854px;
  display: flex;
  align-items: center;
  padding-left: 20px;
  border: 2px solid;
  border-color: #777 #fff #fff #777;
}
.i360 { width: 51px; height: 51px; margin-right: 26px; }
.speaker { width: 50px; height: 50px; margin-right: 27px; }
.network { width: 51px; height: 51px; margin-right: 47px; }
.score { width: 71px; height: 71px; margin: 14px 32px 0 0; border-radius: 50%; background: #0ad66a; color: #fff; font-size: 32px; line-height: 71px; text-align: center; }
.clock { width: 279px; margin: 2px 47px 0 0; display: flex; flex-direction: column; align-items: center; font-size: 35px; line-height: 51px; color: #000; white-space: nowrap; }
.notes { position: relative; width: 80px; height: 72px; margin: 20px 14px 0 0; }
.notes svg { width: 60px; height: 58px; }
.notes b { position: absolute; right: 0; bottom: 0; width: 44px; height: 46px; border-radius: 5px; background: #e60000; color: #fff; font-size: 32px; font-weight: 400; line-height: 46px; text-align: center; }
.monitor { width: 48px; height: 40px; }

/* input method bar */
.ime { position: absolute; left: 2482px; right: 952px; bottom: 133px; height: 88px; }
.ime-bar { position: absolute; left: 74px; right: 0; top: 10px; height: 75px; display: flex; align-items: center; gap: 27px; padding-left: 35px; background: #fbfdff; border: 3px solid #b8c8d8; border-left: 0; }
.ime-logo { position: absolute; left: 0; top: 0; width: 88px; height: 88px; z-index: 1; }
.ime-lang { font: bold 44px/60px "Noto Sans CJK SC", sans-serif; color: #1f77c8; margin-right: 8px; }

.watermark {
  position: absolute;
  right: 72px;
  bottom: 72px;
  margin: 0;
  font: 500 104px/112px "Noto Sans CJK SC", sans-serif;
  color: #fff;
  text-shadow: 6px 7px 0 #000;
  white-space: nowrap;
}
```
